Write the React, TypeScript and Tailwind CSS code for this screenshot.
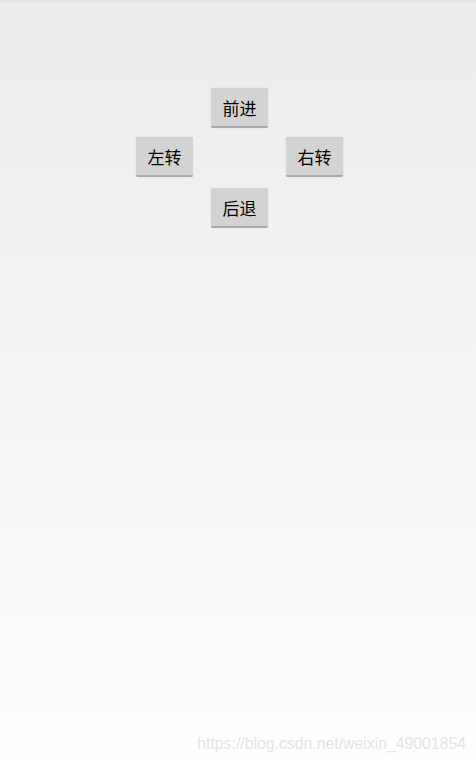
import React from "react";

function Btn({ label }: { label: string }) {
  return (
    <button className="w-[57px] h-[40px] bg-[#d3d3d3] rounded-[2px] border-b-2 border-[#a9a9a9] shadow-[0_0_1px_rgba(0,0,0,0.25)] text-black text-[17px] leading-none flex items-center justify-center [font-family:'Noto_Sans_CJK_SC',sans-serif]">
      {label}
    </button>
  );
}

export default function App() {
  return (
    <div className="relative w-[476px] h-[764px] overflow-hidden bg-gradient-to-b from-[#ebebeb] to-[#fefefe] [font-family:'Noto_Sans_CJK_SC',sans-serif]">
      <div className="h-[3px] bg-gradient-to-b from-[#dedede] to-[#ebebeb]" />
      <div className="flex flex-col items-center pt-[85px] pl-[3px]">
        <div className="flex justify-center">
          <Btn label="前进" />
        </div>
        <div className="flex gap-[93px] mt-[9px]">
          <Btn label="左转" />
          <Btn label="右转" />
        </div>
        <div className="flex justify-center mt-[11px]">
          <Btn label="后退" />
        </div>
      </div>
      <div className="absolute right-[10px] bottom-[8px] text-[15.8px] text-[#e4e4e4] [font-family:'Liberation_Sans',sans-serif]">
        https://blog.csdn.net/weixin_49001854
      </div>
    </div>
  );
}
